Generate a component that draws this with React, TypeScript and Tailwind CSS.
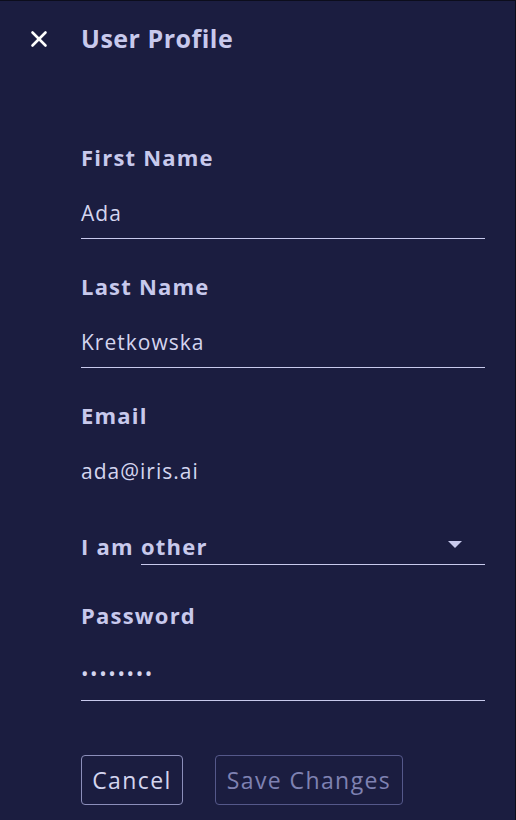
import { X } from 'lucide-react'

const font = { fontFamily: '"Open Sans", "Noto Sans", sans-serif' }

function Field({ label, value, last }: { label: string; value: string; last?: boolean }) {
  return (
    <div className="flex flex-col">
      <div className="h-[30px] text-[22px] leading-[30px] font-bold tracking-[1.2px] text-[#c8c9ec]">{label}</div>
      <div
        className={`mt-[17px] h-[50px] flex items-center text-[21px] tracking-[1px] text-[#d4d5ef] border-b ${
          last ? 'border-transparent' : 'border-[#c8c9ec]'
        }`}
      >
        {value}
      </div>
    </div>
  )
}

export default function App() {
  return (
    <div className="w-[516px] h-[820px] bg-[#1b1d40] border-t border-r border-[#0c0d1c] overflow-hidden" style={font}>
      {/* Header */}
      <div className="flex items-center h-[78px] pl-[26px] -mt-px">
        <button className="w-[26px] h-[26px] flex items-center justify-center text-white">
          <X className="w-[26px] h-[26px]" strokeWidth={2.4} />
        </button>
        <h1 className="ml-[29px] text-[25px] font-bold tracking-[0.5px] text-[#c8c9ec]">User Profile</h1>
      </div>

      {/* Form */}
      <div className="pl-[81px] pr-[30px] pt-[64px] flex flex-col">
        <Field label="First Name" value="Ada" />
        <div className="mt-[32px]">
          <Field label="Last Name" value="Kretkowska" />
        </div>
        <div className="mt-[32px]">
          <Field label="Email" value="ada@iris.ai" last />
        </div>

        {/* Gender select */}
        <div className="mt-[33px] flex items-end h-[35px]">
          <span className="w-[60px] text-[22px] leading-[30px] font-bold tracking-[1.2px] text-[#c8c9ec] pb-[4px] whitespace-nowrap">
            I am
          </span>
          <div className="flex-1 h-[35px] flex items-center justify-between border-b border-[#c8c9ec]">
            <span className="text-[22px] font-bold tracking-[1.2px] text-[#c8c9ec] -mt-px">other</span>
            <svg width="14" height="7" viewBox="0 0 14 7" className="mr-[23px] mb-[5px]">
              <path d="M0 0 H14 L7 7 Z" fill="#c8c9ec" />
            </svg>
          </div>
        </div>

        {/* Password */}
        <div className="mt-[35px] flex flex-col">
          <div className="h-[30px] text-[22px] leading-[30px] font-bold tracking-[1.2px] text-[#c8c9ec]">Password</div>
          <div className="mt-[22px] h-[49px] flex items-center border-b border-[#c8c9ec]">
            <span className="text-[20px] tracking-[1.6px] text-[#d4d5ef] -mt-[4px]">••••••••</span>
          </div>
        </div>

        {/* Actions */}
        <div className="mt-[54px] flex gap-[32px]">
          <button className="h-[50px] w-[102px] rounded-[4px] border border-[#8c8eba] text-[23px] tracking-[1.4px] text-[#d4d5ef]">
            Cancel
          </button>
          <button className="h-[50px] w-[188px] rounded-[4px] border border-[#55588a] text-[23px] tracking-[1.4px] text-[#7f82b2]">
            Save Changes
          </button>
        </div>
      </div>
    </div>
  )
}
